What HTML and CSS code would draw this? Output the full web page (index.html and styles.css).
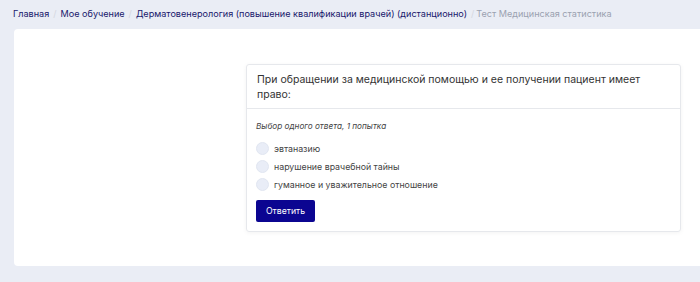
FILE: index.html
```html
<!DOCTYPE html>
<html lang="ru">
<head>
  <meta charset="UTF-8">
  <meta name="viewport" content="width=device-width, initial-scale=1.0">
  <title>Тест Медицинская статистика</title>
  <link rel="stylesheet" href="styles.css">
</head>
<body>
  <div class="breadcrumbs">
    <a href="#">Главная</a>
    <span class="sep">/</span>
    <a href="#">Мое обучение</a>
    <span class="sep">/</span>
    <a href="#">Дерматовенерология (повышение квалификации врачей) (дистанционно)</a>
    <span class="sep">/</span>
    <span class="current">Тест Медицинская статистика</span>
  </div>

  <div class="panel">
    <div class="quiz-side"></div>
    <div class="quiz-card">
      <div class="quiz-title">При обращении за медицинской помощью и ее получении пациент имеет право:</div>
      <div class="quiz-body">
        <div class="quiz-hint">Выбор одного ответа, 1 попытка</div>
        <label class="option"><input type="radio" name="answer"><span class="radio"></span>эвтаназию</label>
        <label class="option"><input type="radio" name="answer"><span class="radio"></span>нарушение врачебной тайны</label>
        <label class="option"><input type="radio" name="answer"><span class="radio"></span>гуманное и уважительное отношение</label>
        <button class="btn-answer">Ответить</button>
      </div>
    </div>
  </div>
</body>
</html>
```

FILE: styles.css
```css
body {
  font-family: Inter, "Noto Sans", Arial, sans-serif;
  margin: 0;
  padding: 0;
  background-color: #eaedf5;
  color: #333;
  overflow: hidden;
}
.breadcrumbs {
  display: flex;
  align-items: center;
  height: 26px;
  padding: 0 0 1px 13px;
  font-size: 9.1px;
  white-space: nowrap;
}
.breadcrumbs a {
  color: #18176b;
  text-decoration: none;
}
.breadcrumbs .sep {
  color: #d4d7e0;
  padding: 0 4px;
}
.breadcrumbs .current {
  color: #9aa1b0;
  margin-left: -2px;
}
.panel {
  background: white;
  margin: 2px -20px 0 14px;
  height: 237px;
  border-radius: 4px;
  display: flex;
  padding-top: 35px;
  box-sizing: border-box;
}
.quiz-side {
  width: 232px;
}
.quiz-card {
  width: 435px;
  height: 168px;
  box-sizing: border-box;
  border: 1px solid #e6e8ec;
  border-radius: 3px;
  box-shadow: 0 1px 4px rgba(0,0,0,0.05);
}
.quiz-title {
  font-size: 10.5px;
  line-height: 14.5px;
  padding: 8px 10px 6px;
  border-bottom: 1px solid #e6e8ec;
  color: #333;
}
.quiz-body {
  padding: 11px 9px 0;
}
.quiz-hint {
  font-size: 8.2px;
  line-height: 12px;
  font-style: italic;
  color: #444;
  margin-bottom: 7px;
}
.option {
  display: flex;
  align-items: center;
  height: 18px;
  font-size: 8.8px;
  color: #444;
  cursor: pointer;
}
.option input {
  display: none;
}
.option .radio {
  width: 11px;
  height: 11px;
  border-radius: 50%;
  background: #e9edf7;
  border: 1px solid #e1e6f1;
  margin-right: 5px;
}
.btn-answer {
  margin-top: 7px;
  background-color: #0b0591;
  color: white;
  border: none;
  border-radius: 2px;
  height: 22px;
  width: 59px;
  padding: 0;
  font-family: inherit;
  font-size: 8.7px;
  cursor: pointer;
}
.btn-answer:hover {
  background-color: #08046d;
}
```
